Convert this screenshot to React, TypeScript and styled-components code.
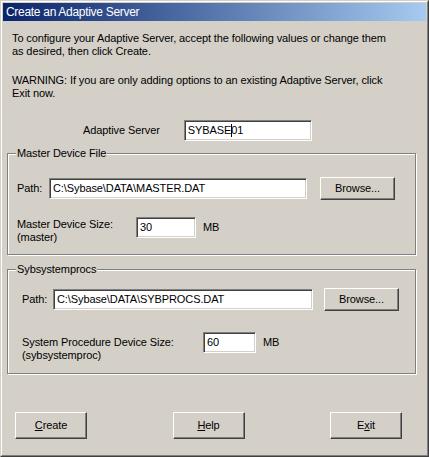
import React from "react";
import styled, { createGlobalStyle } from "styled-components";

const Global = createGlobalStyle`
  html, body { margin: 0; padding: 0; background: #d4d0c8; }
  body { font-family: "Liberation Sans", Arial, sans-serif; font-size: 11px; letter-spacing: -0.1px; color: #000; }
`;

const Window = styled.div`
  width: 429px;
  height: 457px;
  box-sizing: border-box;
  border: 1px solid;
  border-color: #d4d0c8 #404040 #404040 #d4d0c8;
  background: #d4d0c8;
`;

const WindowInner = styled.div`
  height: 100%;
  box-sizing: border-box;
  border: 1px solid;
  border-color: #ffffff #808080 #808080 #ffffff;
  padding: 1px;
  display: flex;
  flex-direction: column;
`;

const TitleBar = styled.div`
  height: 18px;
  flex: none;
  background: linear-gradient(to right, #0a246a, #a6caf0);
  color: #fff;
  font-size: 12px;
  letter-spacing: -0.3px;
  line-height: 18px;
  padding-left: 3px;
  white-space: nowrap;
`;

const Body = styled.div`
  flex: 1;
  display: flex;
  flex-direction: column;
  padding: 11px 0 0 0;
  line-height: 13px;
`;

const Para = styled.p<{ $top?: number }>`
  margin: ${(p) => p.$top ?? 0}px 0 0 9px;
  white-space: nowrap;
`;

const ServerRow = styled.div`
  display: flex;
  align-items: center;
  margin: 20px 0 0 80px;
  gap: 24px;
`;

const TextBox = styled.div<{ $w: number }>`
  width: ${(p) => p.$w}px;
  height: 21px;
  box-sizing: border-box;
  border: 1px solid;
  border-color: #808080 #ffffff #ffffff #808080;
  box-shadow: inset 1px 1px 0 #404040, inset -1px -1px 0 #d4d0c8;
  background: #fff;
  padding: 0 3px;
  display: flex;
  align-items: center;
  white-space: nowrap;
  flex: none;
`;

const Caret = styled.span`
  display: inline-block;
  width: 1px;
  height: 13px;
  background: #000;
  margin-right: -1px;
  vertical-align: middle;
`;

const GroupBox = styled.div<{ $top: number; $h: number }>`
  margin: ${(p) => p.$top}px 0 0 4px;
  width: 409px;
  height: ${(p) => p.$h}px;
  box-sizing: border-box;
  border: 1px solid #808080;
  box-shadow: 1px 1px 0 #ffffff, inset 1px 1px 0 #ffffff;
  display: flex;
  flex-direction: column;
`;

const GroupTitle = styled.span`
  align-self: flex-start;
  margin: -7px 0 0 8px;
  padding: 0 1px;
  background: #d4d0c8;
  line-height: 13px;
`;

const FieldRow = styled.div<{ $top: number; $left: number }>`
  display: flex;
  align-items: center;
  margin: ${(p) => p.$top}px 0 0 ${(p) => p.$left}px;
`;

const Label = styled.span<{ $w: number }>`
  width: ${(p) => p.$w}px;
  flex: none;
`;

const Button = styled.button<{ $w?: number; $h?: number; $ml?: number }>`
  width: ${(p) => p.$w ?? 75}px;
  height: ${(p) => p.$h ?? 23}px;
  margin-left: ${(p) => p.$ml ?? 0}px;
  box-sizing: border-box;
  border: 1px solid;
  border-color: #ffffff #404040 #404040 #ffffff;
  box-shadow: inset -1px -1px 0 #808080;
  background: #d4d0c8;
  font: inherit;
  letter-spacing: inherit;
  color: #000;
  padding: 0;
  flex: none;
`;

const SizeRow = styled.div<{ $top: number; $left: number }>`
  display: flex;
  align-items: flex-start;
  margin: ${(p) => p.$top}px 0 0 ${(p) => p.$left}px;
`;

const SizeLabel = styled.span<{ $w: number; $dy: number }>`
  width: ${(p) => p.$w}px;
  flex: none;
  padding-top: ${(p) => p.$dy}px;
`;

const Unit = styled.span`
  margin-left: 7px;
  line-height: 21px;
`;

const ButtonRow = styled.div`
  display: flex;
  justify-content: space-between;
  padding: 0 24px 0 12px;
  margin-top: 38px;
`;

const Mnemonic = styled.u`
  text-decoration: underline;
`;

export default function App() {
  return (
    <>
      <Global />
      <Window>
        <WindowInner>
          <TitleBar>Create an Adaptive Server</TitleBar>
          <Body>
            <Para>
              To configure your Adaptive Server, accept the following values or change them
              <br />
              as desired, then click Create.
            </Para>
            <Para $top={16}>
              WARNING: If you are only adding options to an existing Adaptive Server, click
              <br />
              Exit now.
            </Para>
            <ServerRow>
              <span>Adaptive Server</span>
              <TextBox $w={128}>
                SYBASE
                <Caret />
                01
              </TextBox>
            </ServerRow>

            <GroupBox $top={12} $h={102}>
              <GroupTitle>Master Device File</GroupTitle>
              <FieldRow $top={17} $left={9}>
                <Label $w={32}>Path:</Label>
                <TextBox $w={258}>C:\Sybase\DATA\MASTER.DAT</TextBox>
                <Button $ml={13}>Browse...</Button>
              </FieldRow>
              <SizeRow $top={17} $left={9}>
                <SizeLabel $w={119} $dy={1}>
                  Master Device Size:
                  <br />
                  (master)
                </SizeLabel>
                <TextBox $w={60}>30</TextBox>
                <Unit>MB</Unit>
              </SizeRow>
            </GroupBox>

            <GroupBox $top={14} $h={105}>
              <GroupTitle>Sybsystemprocs</GroupTitle>
              <FieldRow $top={12} $left={14}>
                <Label $w={31}>Path:</Label>
                <TextBox $w={260}>C:\Sybase\DATA\SYBPROCS.DAT</TextBox>
                <Button $ml={11}>Browse...</Button>
              </FieldRow>
              <SizeRow $top={21} $left={14}>
                <SizeLabel $w={181} $dy={4}>
                  System Procedure Device Size:
                  <br />
                  (sybsystemproc)
                </SizeLabel>
                <TextBox $w={53}>60</TextBox>
                <Unit>MB</Unit>
              </SizeRow>
            </GroupBox>

            <ButtonRow>
              <Button $w={72} $h={27}>
                <Mnemonic>C</Mnemonic>reate
              </Button>
              <Button $w={72} $h={27}>
                <Mnemonic>H</Mnemonic>elp
              </Button>
              <Button $w={72} $h={27}>
                E<Mnemonic>x</Mnemonic>it
              </Button>
            </ButtonRow>
          </Body>
        </WindowInner>
      </Window>
    </>
  );
}
